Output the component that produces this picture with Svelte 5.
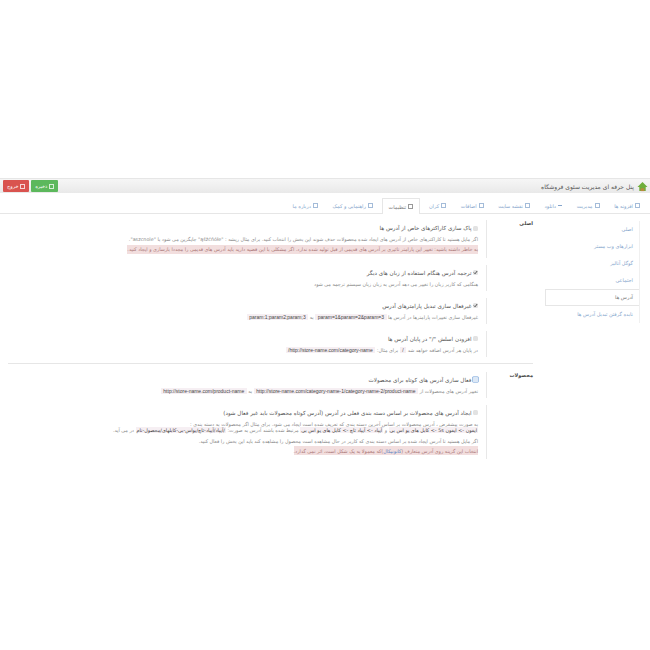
<script>
	const tabs = [
		{ label: 'افزونه ها' },
		{ label: 'مدیریت' },
		{ label: 'دانلود', icon: 'minus' },
		{ label: 'نقشه سایت' },
		{ label: 'اضافات' },
		{ label: 'کران' },
		{ label: 'تنظیمات', active: true },
		{ label: 'راهنمایی و کمک' },
		{ label: 'درباره ما' }
	];

	const menu = ['اصلی', 'ابزارهای وب مستر', 'گوگل آنالیز', 'اجتماعی', 'آدرس ها', 'نابده گرفتن تبدیل آدرس ها'];
</script>

<div class="page">
	<header class="bar">
		<svg class="logo" viewBox="0 0 12 12" width="11" height="11">
			<path d="M6 1 L11.5 6.5 H9.5 V11 H2.5 V6.5 H0.5 Z" fill="#6fae3c" />
			<rect x="4" y="8" width="4" height="3" fill="#b98a3e" />
		</svg>
		<span class="brand">پنل حرفه ای مدیریت سئوی فروشگاه</span>
		<div class="actions">
			<button class="btn red"><i class="sq"></i>خروج</button>
			<button class="btn green"><i class="sq"></i>ذخیره</button>
		</div>
	</header>

	<nav class="tabs">
		{#each tabs as tab}
			<span class="tab" class:active={tab.active}>
				{#if tab.icon === 'minus'}<i class="dash"></i>{:else}<i class="sq"></i>{/if}{tab.label}
			</span>
		{/each}
	</nav>

	<div class="content">
		<ul class="menu">
			{#each menu as item, i}
				<li class:current={i === 4}>{item}</li>
			{/each}
		</ul>

		<div class="panel">
			<section class="sec first">
				<h4>اصلی</h4>
				<div class="groups">
					<div class="group">
						<label><i class="cb"></i>پاک سازی کاراکترهای خاص از آدرس ها</label>
						<p>اگر مایل هستید تا کاراکترهای خاص از آدرس های ایجاد شده محصولات حذف شوند این بخش را انتخاب کنید. برای مثال ریشه : "ąśżćńółe" جایگزین می شود با "aszcnole".</p>
						<p class="warn">به خاطر داشته باشید: تغییر این پارامتر تاثیری بر آدرس های قدیمی از قبل تولید شده ندارد. اگر مشکلی با این قضیه دارید باید آدرس های قدیمی را مجددا بازسازی و ایجاد کنید.</p>
					</div>
					<div class="group">
						<label><i class="cb on"><svg viewBox="0 0 6 6"><path d="M1 3 L2.5 4.5 L5 1.2" /></svg></i>ترجمه آدرس هنگام استفاده از زبان های دیگر</label>
						<p>هنگامی که کاربر زبان را تغییر می دهد آدرس به زبان زبان سیستم ترجمه می شود</p>
					</div>
					<div class="group">
						<label><i class="cb on"><svg viewBox="0 0 6 6"><path d="M1 3 L2.5 4.5 L5 1.2" /></svg></i>غیرفعال سازی تبدیل پارامترهای آدرس</label>
						<p>غیرفعال سازی تغییرات پارامترها در آدرس ها <code>param=1&amp;param=2&amp;param=3</code> به <code>param:1;param2;param;3</code></p>
					</div>
					<div class="group">
						<label><i class="cb"></i>افزودن اسلش "/" در پایان آدرس ها</label>
						<p>در پایان هر آدرس اضافه خواهد شد <code>/</code> برای مثال: <code>http://store-name.com/category-name/</code></p>
					</div>
				</div>
			</section>

			<section class="sec">
				<h4>محصولات</h4>
				<div class="groups">
					<div class="group">
						<label><i class="cb blue"></i>فعال سازی آدرس های کوتاه برای محصولات</label>
						<p>تغییر آدرس های محصولات از <code>http://store-name.com/category-name-1/category-name-2/product-name</code> به <code>http://store-name.com/product-name</code></p>
					</div>
					<div class="group">
						<label><i class="cb"></i>ایجاد آدرس های محصولات بر اساس دسته بندی فعلی در آدرس (آدرس کوتاه محصولات باید غیر فعال شود)</label>
						<p class="tight">به صورت پیشفرض ، آدرس محصولات بر اساس آخرین دسته بندی که تعریف شده است ایجاد می شود. برای مثال اگر محصولات به دسته بندی :<br /><code class="chain">ایفون -&gt; ایفون 5s -&gt; کابل های یو اس بی</code> و <code class="chain">آیپاد -&gt; آیپاد تاچ -&gt; کابل های یو اس بی</code> مرتبط شده باشند آدرس به صورت: <code class="chain">/آیپاد/آیپاد-تاچ/یواس-بی-کابلهای/محصول-نام</code> در می آید.</p>
						<p class="after">اگر مایل هستید تا آدرس ایجاد شده بر اساس دسته بندی که کاربر در حال مشاهده است محصول را مشاهده کند باید این بخش را فعال کنید.</p>
						<p class="warn">انتخاب این گزینه روی آدرس متعارف (<a href="#canonical">کانونیکال</a>)که معمولا به یک شکل است، اثر نمی گذارد.</p>
					</div>
				</div>
			</section>
		</div>
	</div>
</div>

<style>
	:global(body) {
		background: #fff;
	}

	.page {
		padding-top: 178px;
		direction: rtl;
		font-family: 'DejaVu Sans', sans-serif;
		font-size: 4.85px;
		color: #777;
	}

	.bar {
		display: flex;
		align-items: center;
		height: 15px;
		padding: 0 2px 0 3px;
		background: linear-gradient(#f6f6f6, #e9e9e9);
		border-top: 1px solid #e6e6e6;
		box-sizing: border-box;
	}

	.brand {
		margin-right: 3px;
		font-size: 6px;
		color: #555;
	}

	.actions {
		display: flex;
		flex-direction: row-reverse;
		gap: 2px;
		margin-right: auto;
	}

	.btn {
		display: flex;
		align-items: center;
		justify-content: center;
		gap: 1.5px;
		height: 12px;
		padding: 0 4px;
		border: 0;
		border-radius: 1px;
		font: 5px 'DejaVu Sans', sans-serif;
		color: #fff;
	}

	.btn.red {
		width: 26px;
		background: #d9534f;
	}

	.btn.green {
		width: 27px;
		background: #5cb85c;
	}

	.sq {
		display: inline-block;
		width: 3px;
		height: 3px;
		border: 0.6px solid currentColor;
		opacity: 0.75;
	}

	.dash {
		display: inline-block;
		width: 4px;
		height: 1px;
		background: currentColor;
		vertical-align: middle;
	}

	.tabs {
		display: flex;
		margin-top: 5px;
		height: 16px;
		padding-right: 4px;
		border-bottom: 1px solid #e6e6e6;
		box-sizing: border-box;
	}

	.tab {
		display: flex;
		align-items: center;
		gap: 2px;
		padding: 0 6px;
		margin-left: 2.7px;
		font-size: 5px;
		color: #85a5cc;
		white-space: nowrap;
	}

	.tab.active {
		height: 16px;
		color: #777;
		background: #fff;
		border: 1px solid #e6e6e6;
		border-bottom: 0;
		box-sizing: border-box;
		border-radius: 1px 1px 0 0;
	}

	.content {
		display: flex;
		align-items: flex-start;
		padding: 6px 10px 0 0;
	}

	.menu {
		flex: 0 0 95px;
		margin: 1px 0 0;
		padding: 0;
		list-style: none;
		color: #85a5cc;
		border-right: 1px solid #f0f0f0;
		box-sizing: border-box;
		font-size: 5px;
	}

	.menu li {
		height: 17px;
		line-height: 17px;
		padding-right: 6px;
		box-sizing: border-box;
	}

	.menu li.current {
		color: #777;
		border: 1px solid #e6e6e6;
		border-right: 0;
		line-height: 15px;
		background: #fff;
	}

	.panel {
		flex: 1;
		margin-right: 12px;
		margin-left: 8px;
	}

	.sec {
		display: flex;
		padding-top: 8px;
	}

	.sec.first {
		padding-top: 0;
		border-bottom: 1px solid #e6e6e6;
	}

	.sec.first .group:last-child {
		margin-bottom: 6px;
	}

	h4 {
		flex: 0 0 46px;
		margin: 0;
		font-size: 5px;
		line-height: 6px;
		font-weight: bold;
		color: #444;
	}

	.groups {
		flex: 1;
		min-width: 0;
	}

	.group {
		margin-bottom: 7px;
		padding: 3px 8px 4px 0;
		border-right: 1px solid #e8e8e8;
	}

	label {
		display: flex;
		align-items: center;
		gap: 1.5px;
		font-size: 5.6px;
		color: #555;
		height: 10px;
	}

	.cb {
		display: inline-block;
		flex: none;
		width: 5px;
		height: 5px;
		background: #e2e2e2;
		border-radius: 1.5px;
	}

	.cb svg {
		display: block;
		width: 5px;
		height: 5px;
		fill: none;
		stroke: #444;
		stroke-width: 1.1;
	}

	.cb.blue {
		background: #dce8f6;
		border-radius: 0.5px;
		box-shadow: 0 0 0 0.6px #6b9bd6;
	}

	p {
		margin: 3px 0 0;
		line-height: 6px;
		color: #888;
	}

	p.after {
		margin-top: 5px;
	}

	.warn {
		display: table;
		margin-top: 2.5px;
		padding: 1.5px 0;
		background: #f2dede;
		color: #a77;
	}

	.warn a {
		color: #5b86c4;
		text-decoration: none;
	}

	code {
		padding: 0 2.5px;
		background: #f6eff3;
		color: #444;
		font-family: 'Liberation Sans', sans-serif;
		font-size: 5px;
	}

	code.chain {
		padding: 0 1px;
		font-family: 'DejaVu Sans', sans-serif;
		font-size: 4.9px;
	}
</style>
